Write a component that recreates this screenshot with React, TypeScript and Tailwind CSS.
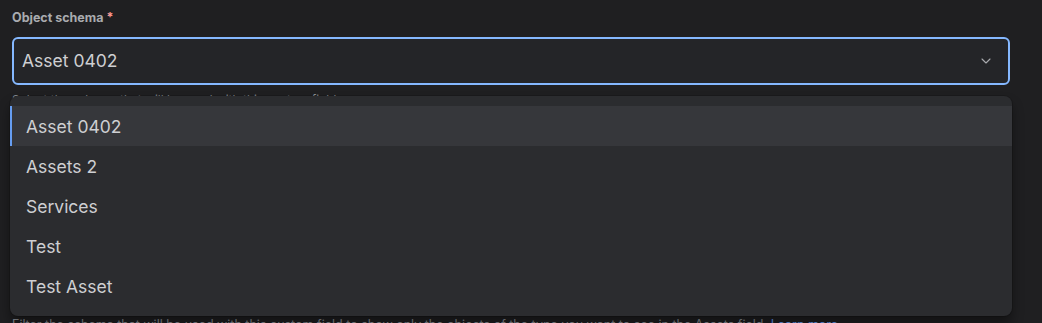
import { ChevronDown } from "lucide-react";

const options = ["Asset 0402", "Assets 2", "Services", "Test", "Test Asset"];

export default function App() {
  return (
    <div
      className="relative h-[323px] w-[1042px] overflow-hidden bg-[#1f1f21] px-3 pt-[10px]"
      style={{ fontFamily: "Inter, 'Noto Sans', sans-serif" }}
    >
      {/* Label */}
      <label className="block text-[12.5px] font-bold leading-4 text-[#a9abaf]">
        Object schema <span className="text-[#fd9891]">*</span>
      </label>

      {/* Select */}
      <div className="mt-[11px] flex h-12 w-[998px] items-center justify-between rounded-md border-2 border-[#85b8ff] bg-[#242528] pl-2 pr-[14px]">
        <span className="text-[17.5px] text-[#cecfd2]">Asset 0402</span>
        <ChevronDown size={16} strokeWidth={1.6} className="text-[#a9abaf]" />
      </div>

      <p className="mt-[7px] whitespace-nowrap text-[12px] leading-4 text-[#8c8f97]">
        Select the schema that will be used with this custom field.
      </p>

      <p className="mt-[209px] whitespace-nowrap text-[12.5px] leading-4 text-[#8c8f97]">
        Filter the schema that will be used with this custom field to show only the objects of the type you want to see in the Assets field.{" "}
        <span className="text-[#669df1]">Learn more</span>
      </p>

      {/* Dropdown menu */}
      <div className="absolute left-[10px] top-[96px] w-[1002px] rounded-lg bg-[#2b2c2f] py-[10px] shadow-[0_0_0_1px_rgba(0,0,0,0.15),0_8px_12px_rgba(0,0,0,0.4)]">
        {options.map((o, i) => (
          <div
            key={o}
            className={
              i === 0
                ? "flex h-10 items-center border-l-2 border-[#669df1] bg-[#36373b] pl-[14px] pt-[2px] text-[17.5px] text-[#cecfd2]"
                : "flex h-10 items-center border-l-2 border-transparent pl-[14px] pt-[2px] text-[17.5px] text-[#cecfd2]"
            }
          >
            {o}
          </div>
        ))}
      </div>
    </div>
  );
}
